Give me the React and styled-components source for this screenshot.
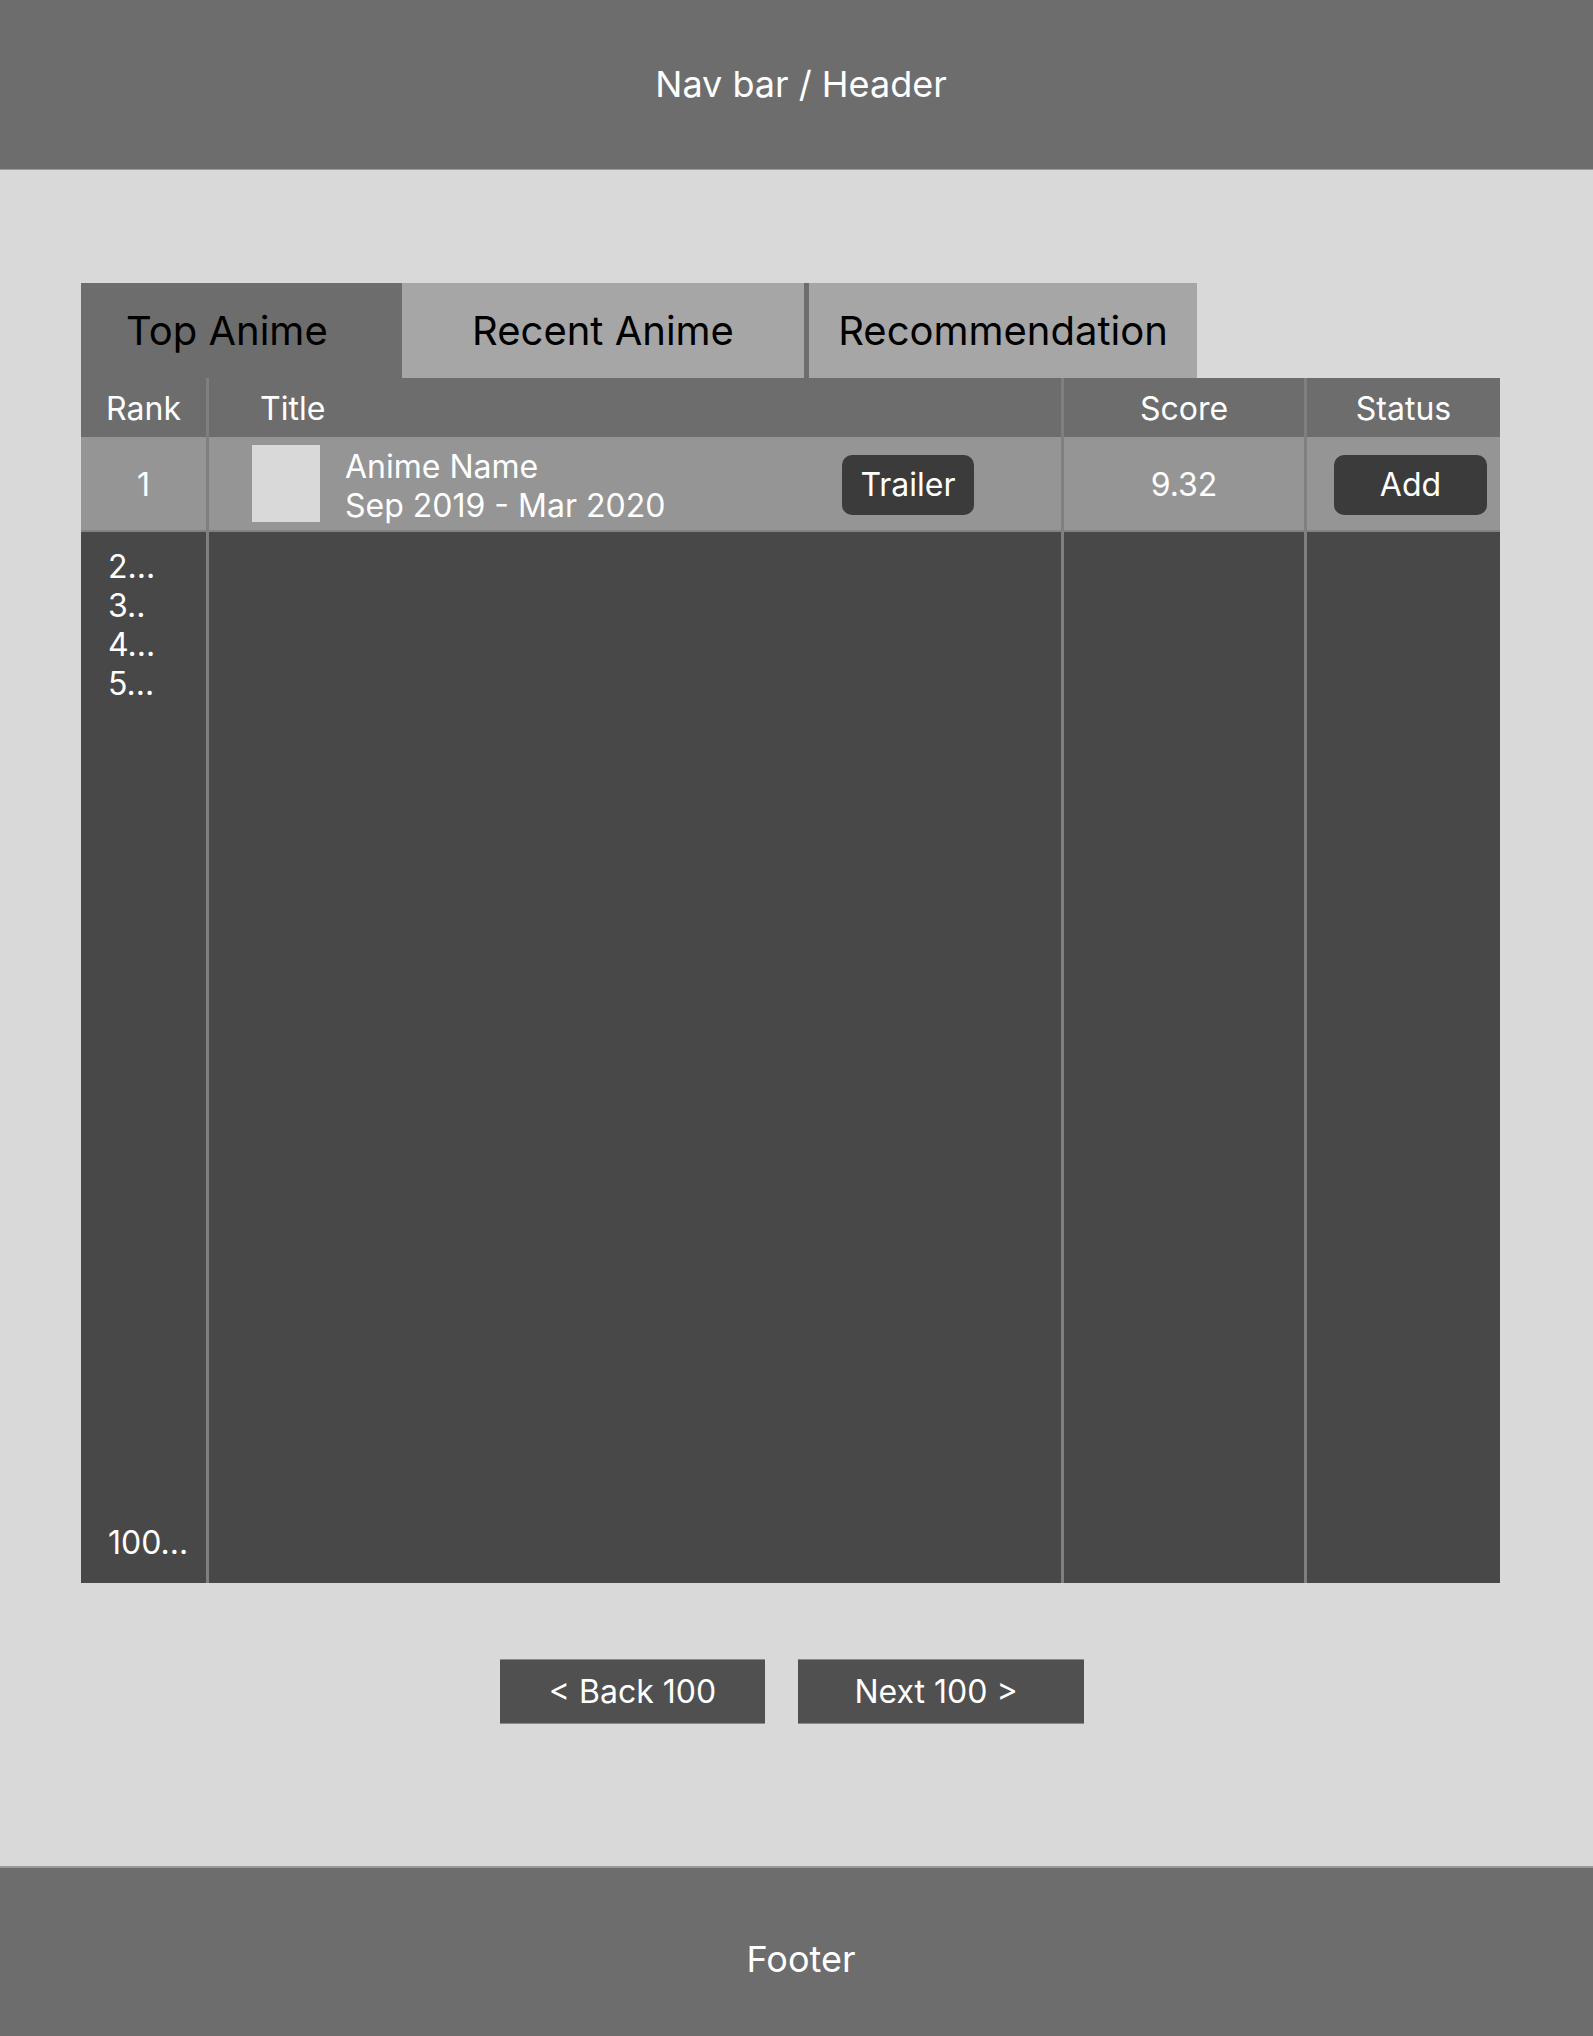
import styled, { createGlobalStyle } from 'styled-components';

const GlobalStyle = createGlobalStyle`
    * {
        box-sizing: border-box;
    }

    body {
        margin: 0;
        background: #d9d9d9;
        font-family: Inter, 'Noto Sans', sans-serif;
    }
`;

const Page = styled.div`
    display: flex;
    flex-direction: column;
    min-height: 2036px;
`;

const Header = styled.header`
    height: 170px;
    display: flex;
    align-items: center;
    justify-content: center;
    padding: 0 0 2px 9px;
    background: #6d6d6d;
    border-bottom: 1px solid #9a9a9a;
    color: #fff;
    font-size: 36px;
`;

const Main = styled.main`
    flex: 1;
    padding: 113px 0 142px 81px;
`;

const Tabs = styled.div`
    display: flex;
    height: 95px;
`;

const Tab = styled.div`
    width: ${({ $width }) => $width}px;
    display: flex;
    align-items: center;
    justify-content: ${({ $start }) => ($start ? 'flex-start' : 'center')};
    padding-left: ${({ $start }) => ($start ? '45px' : '0')};
    background: ${({ $active }) => ($active ? '#6d6d6d' : '#a6a6a6')};
    border-left: ${({ $divider }) => ($divider ? '5px solid #6d6d6d' : 'none')};
    color: #000;
    font-size: 40px;
`;

const Table = styled.div`
    display: grid;
    grid-template-columns: 128px 855px 243px 193px;
    width: 1419px;
`;

const HeadCell = styled.div`
    height: 59px;
    display: flex;
    align-items: center;
    justify-content: ${({ $left }) => ($left ? 'flex-start' : 'center')};
    padding-left: ${({ $left }) => ($left ? '51px' : '0')};
    padding-top: 1px;
    background: #6d6d6d;
    border-right: ${({ $last }) => ($last ? 'none' : '3px solid #7f7f7f')};
    color: #fff;
    font-size: 32px;
`;

const RowCell = styled.div`
    height: 95px;
    display: flex;
    align-items: center;
    justify-content: ${({ $justify }) => $justify || 'center'};
    padding-left: ${({ $pad }) => $pad || 0}px;
    padding-top: 2px;
    background: #959595;
    border-right: ${({ $last }) => ($last ? 'none' : '3px solid #7f7f7f')};
    border-bottom: 2px solid #828282;
    color: #fff;
    font-size: 32px;
`;

const Thumb = styled.div`
    width: 68px;
    height: 77px;
    margin-top: -2px;
    background: #d9d9d9;
`;

const TitleText = styled.div`
    display: flex;
    flex-direction: column;
    margin-left: 25px;
    padding-top: 2px;
    line-height: 39px;
`;

const Pill = styled.button`
    width: ${({ $width }) => $width}px;
    height: 60px;
    margin-left: ${({ $push }) => ($push ? 'auto' : '0')};
    margin-right: ${({ $push }) => ($push ? '87px' : '0')};
    border: none;
    border-radius: 10px;
    background: #3b3b3b;
    color: #fff;
    font-family: inherit;
    font-size: 32px;
    padding: 0;
`;

const BodyCell = styled.div`
    height: 1051px;
    display: flex;
    flex-direction: column;
    justify-content: space-between;
    padding: 15px 0 21px 27px;
    background: #484848;
    border-right: ${({ $last }) => ($last ? 'none' : '3px solid #7f7f7f')};
    color: #fff;
    font-size: 32px;
    line-height: 39px;
`;

const Pager = styled.div`
    display: flex;
    justify-content: center;
    gap: 33px;
    margin-top: 76px;
    padding-right: 90px;
`;

const PageButton = styled.button`
    width: ${({ $width }) => $width}px;
    height: 65px;
    border: none;
    border-top: 1px solid #8a8a8a;
    border-bottom: 1px solid #8a8a8a;
    background: #505050;
    color: #fff;
    font-family: inherit;
    font-size: 32px;
    padding: 0 ${({ $shift }) => $shift || 0}px 0 0;
`;

const Footer = styled.footer`
    height: 170px;
    display: flex;
    align-items: center;
    justify-content: center;
    padding: 14px 0 0 9px;
    background: #6d6d6d;
    border-top: 2px solid #9a9a9a;
    color: #fff;
    font-size: 36px;
`;

export default function App() {
    return (
        <Page>
            <GlobalStyle />
            <Header>Nav bar / Header</Header>
            <Main>
                <Tabs>
                    <Tab $width={321} $active $start>Top Anime</Tab>
                    <Tab $width={402}>Recent Anime</Tab>
                    <Tab $width={393} $divider>Recommendation</Tab>
                </Tabs>
                <Table>
                    <HeadCell>Rank</HeadCell>
                    <HeadCell $left>Title</HeadCell>
                    <HeadCell>Score</HeadCell>
                    <HeadCell $last>Status</HeadCell>

                    <RowCell>1</RowCell>
                    <RowCell $justify="flex-start" $pad={43}>
                        <Thumb />
                        <TitleText>
                            <span>Anime Name</span>
                            <span>Sep 2019 - Mar 2020</span>
                        </TitleText>
                        <Pill $width={132} $push>Trailer</Pill>
                    </RowCell>
                    <RowCell>9.32</RowCell>
                    <RowCell $justify="flex-start" $pad={27} $last>
                        <Pill $width={153}>Add</Pill>
                    </RowCell>

                    <BodyCell>
                        <div>
                            <div>2...</div>
                            <div>3..</div>
                            <div>4...</div>
                            <div>5...</div>
                        </div>
                        <div>100...</div>
                    </BodyCell>
                    <BodyCell />
                    <BodyCell />
                    <BodyCell $last />
                </Table>
                <Pager>
                    <PageButton $width={265}>&lt; Back 100</PageButton>
                    <PageButton $width={286} $shift={10}>Next 100 &gt;</PageButton>
                </Pager>
            </Main>
            <Footer>Footer</Footer>
        </Page>
    );
}
